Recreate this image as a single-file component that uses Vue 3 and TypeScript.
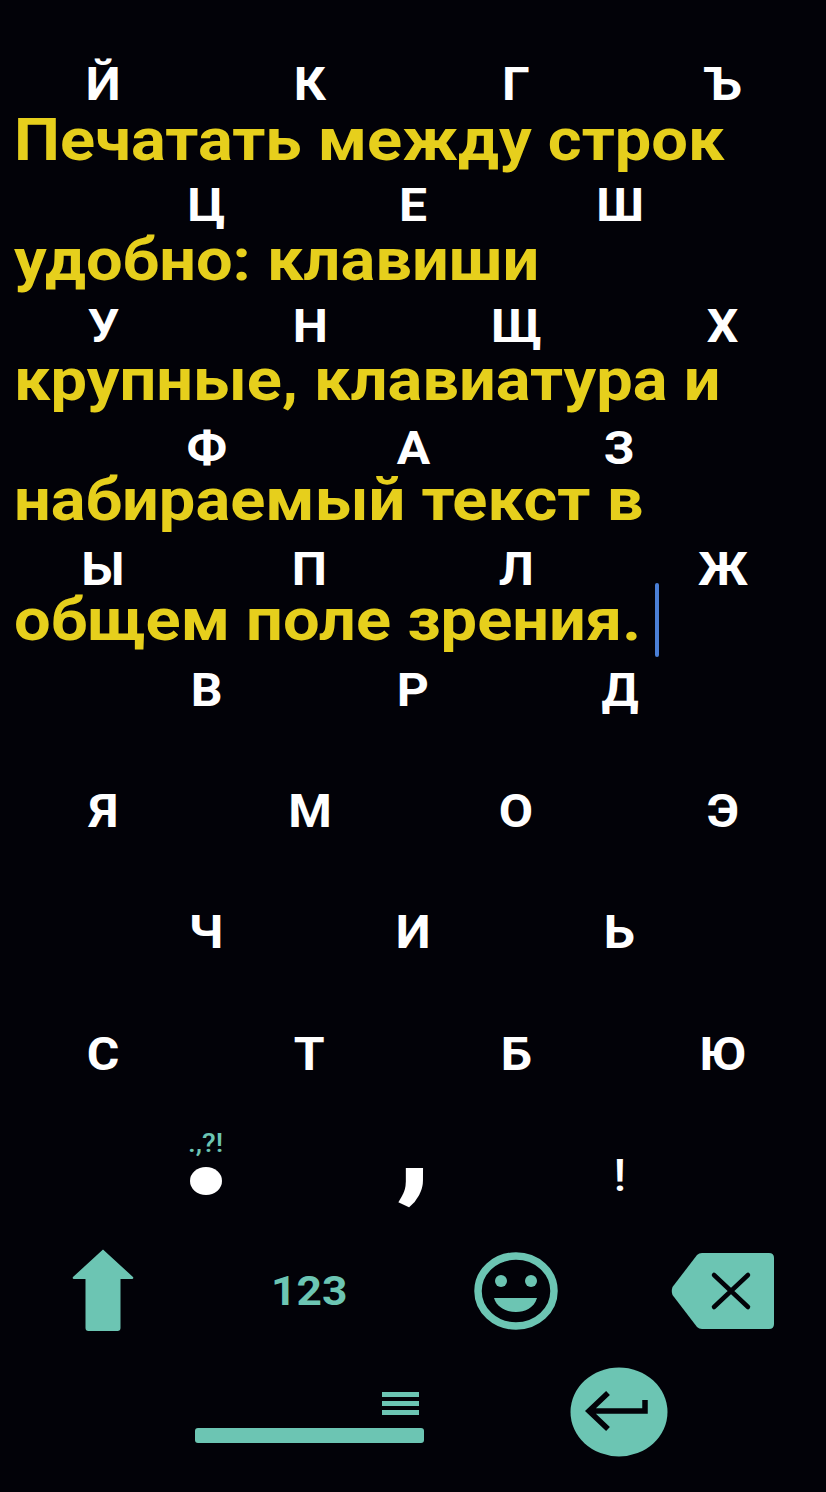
<script setup lang="ts">
const lines: string[] = [
  'Печатать между строк',
  'удобно: клавиши',
  'крупные, клавиатура и',
  'набираемый текст в',
  'общем поле зрения.',
]
const rows: string[][] = [
  ['Й', 'К', 'Г', 'Ъ'],
  ['Ц', 'Е', 'Ш'],
  ['У', 'Н', 'Щ', 'Х'],
  ['Ф', 'А', 'З'],
  ['Ы', 'П', 'Л', 'Ж'],
  ['В', 'Р', 'Д'],
  ['Я', 'М', 'О', 'Э'],
  ['Ч', 'И', 'Ь'],
  ['С', 'Т', 'Б', 'Ю'],
]
</script>

<template>
  <div class="screen">
    <div class="keyboard">
      <div
        v-for="(row, i) in rows"
        :key="i"
        class="row"
        :class="{ inset: row.length === 3 }"
      >
        <div v-for="k in row" :key="k" class="key letter"><span class="wide">{{ k }}</span></div>
      </div>

      <div class="row inset">
        <div class="key">
          <span class="hint">.,?!</span>
          <span class="dot"></span>
        </div>
        <div class="key"><span class="wide comma">,</span></div>
        <div class="key"><span class="wide bang">!</span></div>
      </div>

      <div class="row fn">
        <div class="key">
          <svg class="shift" width="64" height="84" viewBox="0 0 64 84">
            <path fill="#6cc5b3" d="M32 1.500 L62 29 Q63 31 61 31 L49.500 31 L49.500 80 Q49.500 83 46.500 83 L17.500 83 Q14.500 83 14.500 80 L14.500 31 L3 31 Q1 31 2 29 Z" />
          </svg>
        </div>
        <div class="key num"><span class="wide">123</span></div>
        <div class="key">
          <svg width="84" height="78" viewBox="0 0 84 78">
            <ellipse cx="42" cy="39" rx="38" ry="35" fill="none" stroke="#6cc5b3" stroke-width="7.500" />
            <circle cx="27" cy="29" r="6" fill="#6cc5b3" />
            <circle cx="57" cy="29" r="6" fill="#6cc5b3" />
            <path fill="#6cc5b3" d="M20 46 H63 C60 56 51 60 42 60 C33 60 23 56 20 46 Z" />
          </svg>
        </div>
        <div class="key">
          <svg width="104" height="76" viewBox="0 0 104 76">
            <path fill="#6cc5b3" d="M26 2 Q28 0 31 0 H98 Q103 0 103 5 V71 Q103 76 98 76 H31 Q28 76 26 74 L1.500 42 Q0 38 1.500 34 Z" />
            <path fill="none" stroke="#020208" stroke-width="4.500" stroke-linecap="round" d="M43 22 L77 54 M77 22 L43 54" />
          </svg>
        </div>
      </div>

      <div class="row bottom">
        <div class="space-wrap">
          <div class="menu"><i></i><i></i><i></i></div>
          <div class="space"></div>
        </div>
        <div class="enter">
          <svg width="98" height="90" viewBox="0 0 98 90">
            <ellipse cx="49" cy="45" rx="48.500" ry="44.500" fill="#6cc5b3" />
            <path fill="none" stroke="#020208" stroke-width="5.500" d="M22 44 H75 V33 M38 26 L19 44 L38 62" />
          </svg>
        </div>
      </div>
    </div>

    <div class="typed">
      <div v-for="l in lines" :key="l" class="line">{{ l }}</div>
    </div>
    <span class="caret"></span>
  </div>
</template>

<style scoped>
.screen {
  position: relative;
  width: 826px;
  height: 1492px;
  overflow: hidden;
  background: #020208;
  font-family: Roboto, "Noto Sans", sans-serif;
}
.keyboard {
  display: flex;
  flex-direction: column;
  padding-top: 25px;
}
.row {
  display: flex;
  height: 121.2px;
  flex: none;
}
.row.inset {
  padding: 0 103px;
}
.key {
  position: relative;
  flex: 1 1 0;
  display: flex;
  align-items: center;
  justify-content: center;
  color: #fff;
  font-size: 46px;
  font-weight: 700;
  line-height: 1;
}
.letter {
  padding-bottom: 3px;
}
.wide {
  display: inline-block;
  transform: scaleX(1.083);
}
.hint {
  position: absolute;
  left: 85px;
  top: 14px;
  color: #6cc5b3;
  font-size: 26px;
  font-weight: 500;
  transform: scaleX(1.083);
  transform-origin: left center;
}
.dot {
  width: 32px;
  height: 28px;
  border-radius: 50%;
  background: #fff;
  margin-top: 10px;
}
.comma {
  font-size: 134px;
  line-height: 1;
  margin-top: -74px;
}
.bang {
  font-size: 44px;
  font-weight: 500;
}
.fn {
  height: 108px;
}
.shift {
  margin-top: -2px;
}
.num {
  color: #6cc5b3;
  font-size: 41px;
  font-weight: 700;
  padding-top: 2px;
}
.bottom {
  padding: 0 158px 0 195px;
  justify-content: space-between;
  align-items: flex-start;
}
.space-wrap {
  width: 229px;
  display: flex;
  flex-direction: column;
  align-items: flex-end;
  padding-top: 47px;
}
.menu {
  width: 37px;
  margin-right: 5px;
  display: flex;
  flex-direction: column;
  gap: 4px;
}
.menu i {
  display: block;
  height: 5px;
  background: #6cc5b3;
}
.space {
  width: 100%;
  height: 15px;
  margin-top: 13px;
  border-radius: 3px;
  background: #6cc5b3;
}
.enter {
  width: 98px;
  height: 90px;
  margin-top: 22px;
}
.typed {
  position: absolute;
  left: 14px;
  top: 80px;
  color: #e6cf1c;
  font-size: 60px;
  font-weight: 700;
  line-height: 120px;
  white-space: nowrap;
  transform: scaleX(1.083);
  transform-origin: left top;
}
.line {
  height: 120px;
}
.caret {
  position: absolute;
  left: 655px;
  top: 583px;
  width: 4px;
  height: 74px;
  border-radius: 2px;
  background: #4a7fd6;
}
</style>
